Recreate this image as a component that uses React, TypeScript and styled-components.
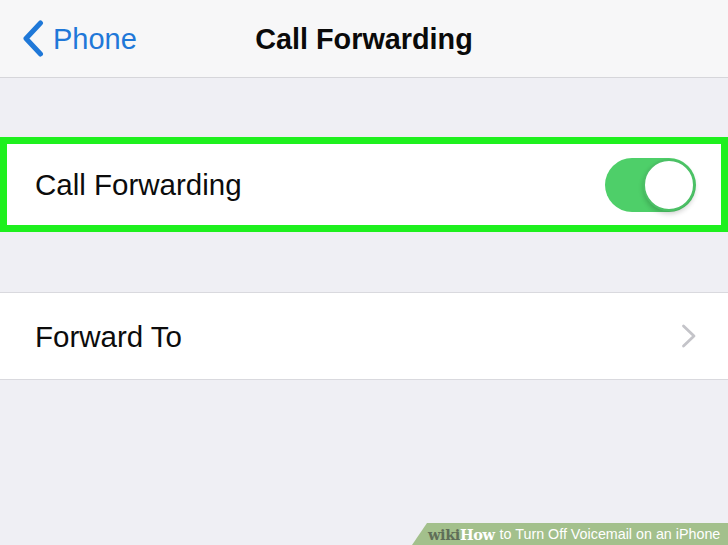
import styled, { createGlobalStyle } from "styled-components";

const GlobalStyle = createGlobalStyle`
  html, body {
    margin: 0;
    padding: 0;
    background: #efeff4;
  }
  body {
    font-family: "Liberation Sans", Arial, sans-serif;
  }
`;

const BackChevron = () => (
  <svg width="22" height="37" viewBox="0 0 22 37">
    <path
      d="M18.5 3 L4 18.5 L18.5 34"
      fill="none"
      stroke="#1f78d8"
      strokeWidth="5"
      strokeLinecap="round"
      strokeLinejoin="round"
    />
  </svg>
);

const RowChevron = () => (
  <svg width="16" height="24" viewBox="0 0 16 24">
    <path
      d="M2.5 2 L13 12 L2.5 22"
      fill="none"
      stroke="#c4c4c9"
      strokeWidth="2.8"
      strokeLinecap="round"
      strokeLinejoin="round"
    />
  </svg>
);

const App = () => {
  return (
    <>
      <GlobalStyle />
      <Screen>
        <NavBar>
          <BackButton>
            <BackChevron />
            <BackLabel>Phone</BackLabel>
          </BackButton>
          <NavTitle>Call Forwarding</NavTitle>
          <span />
        </NavBar>

        <Section>
          <Highlight>
            <Row>
              <RowLabel>Call Forwarding</RowLabel>
              <Toggle $on>
                <Knob />
              </Toggle>
            </Row>
          </Highlight>
        </Section>

        <Section>
          <Group>
            <Row $bordered>
              <RowLabel>Forward To</RowLabel>
              <RowChevron />
            </Row>
          </Group>
        </Section>

        <Watermark>
          <WikiText>wiki</WikiText>
          <HowText>How</HowText>
          <CaptionText>to Turn Off Voicemail on an iPhone</CaptionText>
        </Watermark>
      </Screen>
    </>
  );
};

export default App;

const Screen = styled.div`
  position: relative;
  width: 728px;
  height: 545px;
  overflow: hidden;
  background: #efeff4;
  display: flex;
  flex-direction: column;
`;

const NavBar = styled.div`
  height: 77px;
  flex-shrink: 0;
  display: grid;
  grid-template-columns: 1fr auto 1fr;
  align-items: center;
  background: #f7f7f8;
  border-bottom: 1px solid #d6d6da;
`;

const BackButton = styled.div`
  display: flex;
  align-items: center;
  gap: 9px;
  padding-left: 22px;
  color: #1f78d8;
`;

const BackLabel = styled.span`
  font-size: 29px;
  line-height: 1;
  margin-top: 1px;
`;

const NavTitle = styled.div`
  font-size: 28.8px;
  font-weight: 700;
  color: #0a0a0a;
  margin-top: 1px;
`;

const Section = styled.div`
  margin-top: 59px;
`;

const Highlight = styled.div`
  width: 728px;
  box-sizing: border-box;
  border: 7px solid #1ef01e;
  background: #ffffff;
`;

const Group = styled.div`
  margin-top: 1px;
  background: #ffffff;
  border-top: 1px solid #d9d9de;
  border-bottom: 1px solid #d9d9de;
`;

const Row = styled.div<{ $bordered?: boolean }>`
  display: flex;
  align-items: center;
  justify-content: space-between;
  height: ${(p) => (p.$bordered ? "86px" : "81px")};
  padding-left: ${(p) => (p.$bordered ? "35px" : "28px")};
  padding-right: ${(p) => (p.$bordered ? "31px" : "25px")};
  background: #ffffff;
`;

const RowLabel = styled.span`
  font-size: 29.5px;
  color: #0c0c0c;
  margin-top: 1px;
`;

const Toggle = styled.div<{ $on?: boolean }>`
  width: 91px;
  height: 54px;
  border-radius: 27px;
  box-sizing: border-box;
  padding: 1px;
  display: flex;
  justify-content: ${(p) => (p.$on ? "flex-end" : "flex-start")};
  align-items: center;
  background: ${(p) => (p.$on ? "#4ecf69" : "#e5e5ea")};
`;

const Knob = styled.div`
  width: 52px;
  height: 52px;
  border-radius: 50%;
  box-sizing: border-box;
  background: #ffffff;
  border: 2px solid #4cc066;
  box-shadow: 0 3px 5px rgba(0, 0, 0, 0.18);
`;

const Watermark = styled.div`
  position: absolute;
  right: 0;
  bottom: 0;
  height: 22px;
  width: 316px;
  box-sizing: border-box;
  padding-left: 16px;
  display: flex;
  align-items: center;
  background: #a3c08c;
  clip-path: polygon(15px 0, 100% 0, 100% 100%, 0 100%);
`;

const WikiText = styled.span`
  font-family: "DejaVu Serif", "Liberation Serif", serif;
  font-weight: 700;
  font-size: 14.5px;
  color: #5f6e58;
  letter-spacing: -0.4px;
`;

const HowText = styled.span`
  font-family: "DejaVu Serif", "Liberation Serif", serif;
  font-weight: 700;
  font-size: 14.5px;
  color: #ffffff;
  letter-spacing: -0.4px;
  margin-right: 5px;
`;

const CaptionText = styled.span`
  font-family: "Liberation Sans", Arial, sans-serif;
  font-size: 14.3px;
  color: #ffffff;
  white-space: nowrap;
`;
